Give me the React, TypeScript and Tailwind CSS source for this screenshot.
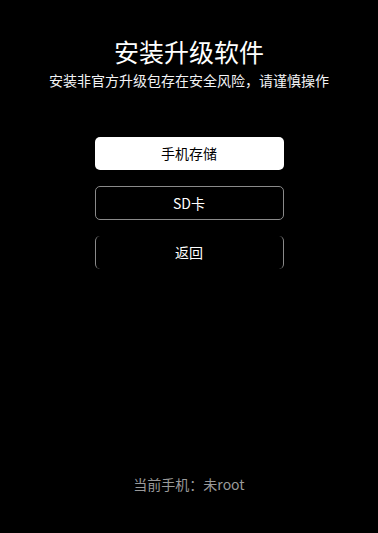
import React from "react";

const font = { fontFamily: '"Noto Sans CJK SC", "Noto Sans", sans-serif' };

export default function App() {
  return (
    <div
      className="w-[378px] h-[533px] bg-black text-white flex flex-col items-center pt-[36px] pb-[39px]"
      style={font}
    >
      {/* TOP */}
      <h1 className="text-[25px] leading-[30px] font-normal">安装升级软件</h1>
      <p className="mt-1 text-[14px] leading-[20px] text-gray-100">
        安装非官方升级包存在安全风险，请谨慎操作
      </p>

      {/* BUTTONS */}
      <div className="mt-[47px] flex flex-col gap-4 w-[189px]">
        <button className="h-[33px] rounded-[5px] bg-white text-black text-[14px]">
          手机存储
        </button>
        <button className="h-[34px] rounded-[5px] border border-[#8a8a8a] text-white text-[14px]">
          SD卡
        </button>
        <button className="h-[33px] rounded-[5px] border-x border-[#8a8a8a] text-white text-[14px]">
          返回
        </button>
      </div>

      {/* BOTTOM */}
      <p className="mt-auto text-[14px] leading-[20px] text-[#9a9a9a]">当前手机：未root</p>
    </div>
  );
}
